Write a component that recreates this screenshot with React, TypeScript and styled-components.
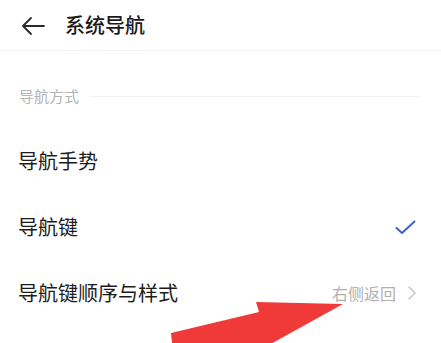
import React from "react";
import styled, { createGlobalStyle } from "styled-components";

const GlobalStyle = createGlobalStyle`
  html, body {
    margin: 0;
    padding: 0;
    background: #fff;
  }
  body {
    font-family: "Noto Sans CJK SC", "Noto Sans", sans-serif;
    color: #1c1c1c;
  }
`;

const SPage = styled.div`
  position: relative;
  width: 441px;
  height: 343px;
  overflow: hidden;
  background: #fff;
`;

const SHeader = styled.div`
  height: 50px;
  display: flex;
  align-items: center;
  padding-left: 21px;
  border-bottom: 1px solid #f3f3f3;
`;

const SBack = styled.svg`
  width: 24px;
  height: 20px;
  margin-top: 2px;
`;

const STitle = styled.div`
  margin-left: 20px;
  font-size: 20px;
  font-weight: 500;
  line-height: 20px;
  color: #1a1a1a;
`;

const SSection = styled.div`
  display: flex;
  align-items: center;
  gap: 11px;
  padding: 35px 21px 0 19px;
  height: 20px;
`;

const SSectionLabel = styled.span`
  font-size: 15px;
  line-height: 20px;
  color: #b4b4b4;
`;

const SSectionLine = styled.div`
  flex: 1;
  height: 1px;
  background: #f2f2f2;
`;

const SList = styled.div`
  margin-top: 22px;
  display: flex;
  flex-direction: column;
`;

const SRow = styled.div`
  height: 66px;
  display: flex;
  align-items: center;
  padding: 0 25px 0 18px;
`;

const SRowLabel = styled.span`
  flex: 1;
  font-size: 20px;
  line-height: 20px;
  color: #1c1c1c;
`;

const SValue = styled.span`
  font-size: 16px;
  line-height: 20px;
  color: #b0b0b0;
  margin-right: 12px;
`;

const SArrowMark = styled.svg`
  position: absolute;
  left: 0;
  top: 0;
  pointer-events: none;
`;

const BackIcon = () => (
  <SBack viewBox="0 0 24 20" fill="none">
    <path
      d="M23 10H2M10 2L2 10l8 8"
      stroke="#2a2a2a"
      strokeWidth="1.8"
      strokeLinecap="round"
      strokeLinejoin="round"
    />
  </SBack>
);

const Check = () => (
  <svg width="21" height="15" viewBox="0 0 21 15" fill="none">
    <path
      d="M1.5 8l5.5 5L19.5 1.5"
      stroke="#3d62c8"
      strokeWidth="2"
      strokeLinecap="round"
      strokeLinejoin="round"
    />
  </svg>
);

const Chevron = () => (
  <svg width="8" height="14" viewBox="0 0 8 14" fill="none">
    <path d="M1 1l6 6-6 6" stroke="#c2c2c2" strokeWidth="1.4" strokeLinecap="round" strokeLinejoin="round" />
  </svg>
);

const App: React.FC = () => {
  return (
    <SPage>
      <GlobalStyle />
      <SHeader>
        <BackIcon />
        <STitle>系统导航</STitle>
      </SHeader>
      <SSection>
        <SSectionLabel>导航方式</SSectionLabel>
        <SSectionLine />
      </SSection>
      <SList>
        <SRow>
          <SRowLabel>导航手势</SRowLabel>
        </SRow>
        <SRow>
          <SRowLabel>导航键</SRowLabel>
          <Check />
        </SRow>
        <SRow>
          <SRowLabel>导航键顺序与样式</SRowLabel>
          <SValue>右侧返回</SValue>
          <Chevron />
        </SRow>
      </SList>
      {/* red annotation arrow drawn over the screenshot */}
      <SArrowMark width="441" height="343" viewBox="0 0 441 343">
        <polygon
          points="171,333 259,312 256,302 343,304 267,346 264,360 176,380"
          fill="#f03a3a"
        />
      </SArrowMark>
    </SPage>
  );
};

export default App;
